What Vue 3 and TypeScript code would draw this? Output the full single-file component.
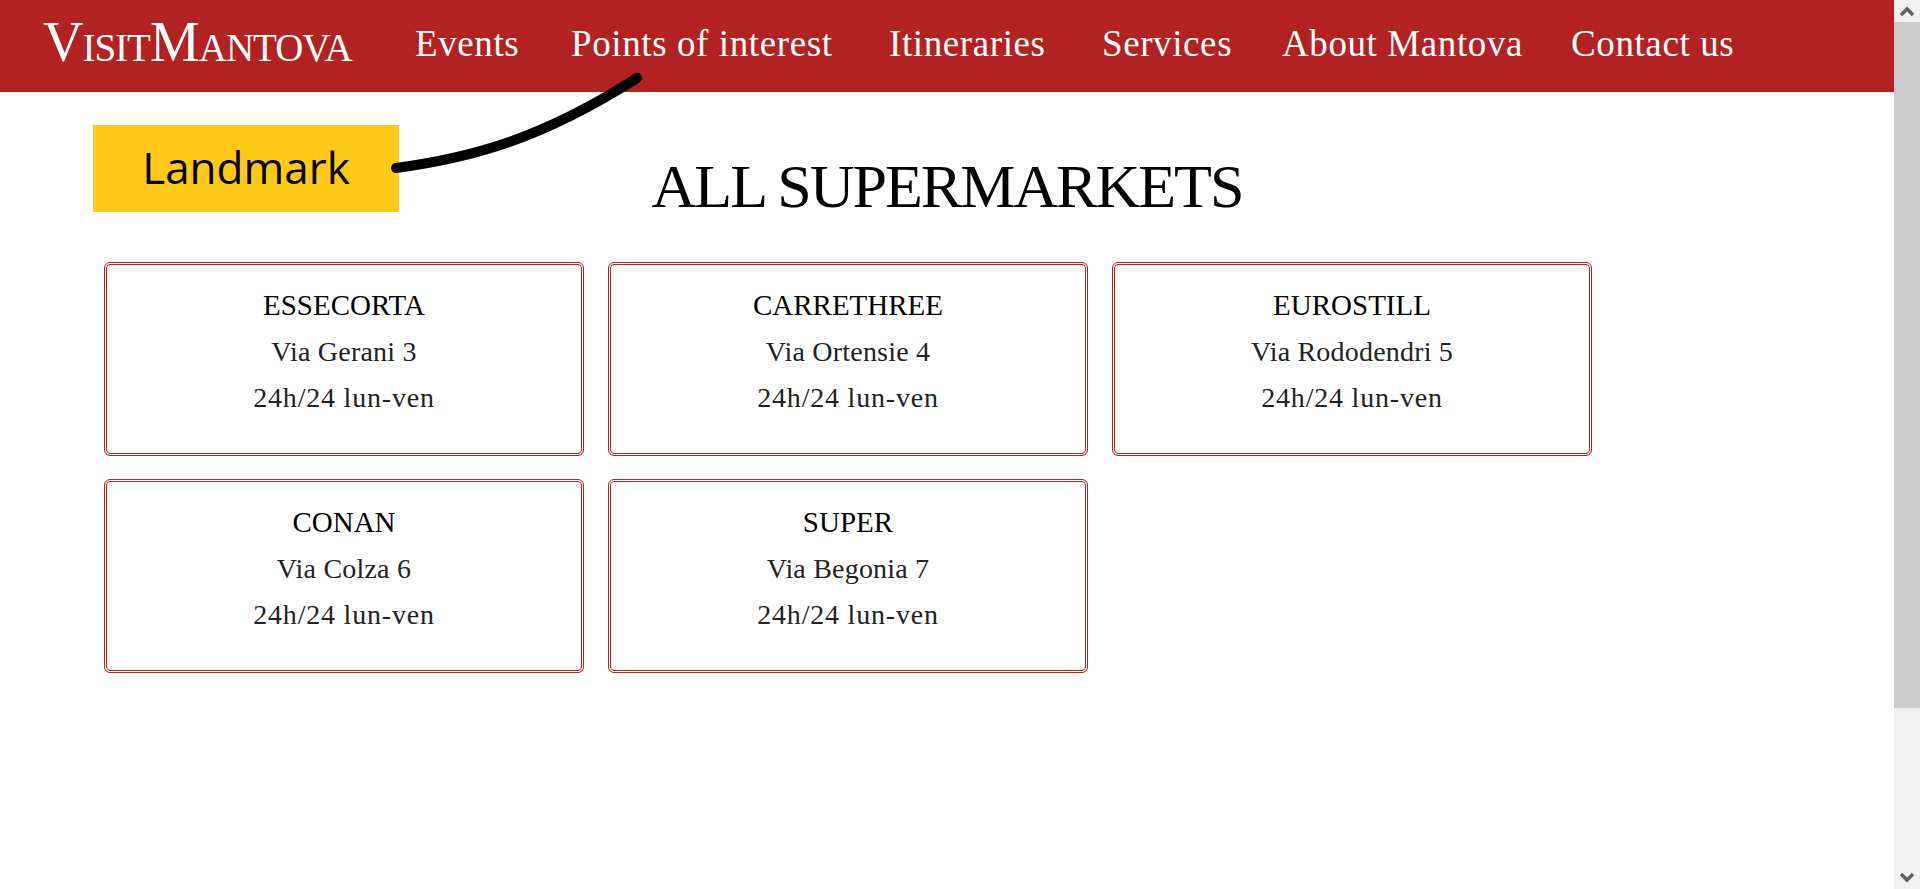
<script setup lang="ts">
const links = ['Events', 'Points of interest', 'Itineraries', 'Services', 'About Mantova', 'Contact us'];

const shops = [
  { name: 'Essecorta', address: 'Via Gerani 3', hours: '24h/24 lun-ven' },
  { name: 'Carrethree', address: 'Via Ortensie 4', hours: '24h/24 lun-ven' },
  { name: 'Eurostill', address: 'Via Rododendri 5', hours: '24h/24 lun-ven' },
  { name: 'Conan', address: 'Via Colza 6', hours: '24h/24 lun-ven' },
  { name: 'Super', address: 'Via Begonia 7', hours: '24h/24 lun-ven' },
];
</script>

<template>
  <div class="window">
    <div class="page">
      <header class="navbar">
        <a class="logo">VisitMantova</a>
        <nav class="links">
          <a v-for="link in links" :key="link">{{ link }}</a>
        </nav>
      </header>

      <main class="content">
        <h1 class="title">All Supermarkets</h1>
        <div class="cards">
          <div v-for="shop in shops" :key="shop.name" class="card">
            <h2>{{ shop.name }}</h2>
            <p class="address">{{ shop.address }}</p>
            <p class="hours">{{ shop.hours }}</p>
          </div>
        </div>
      </main>

      <!-- annotation laid over the page -->
      <div class="landmark">Landmark</div>
      <svg class="pointer" width="1894" height="300" viewBox="0 0 1894 300">
        <path d="M396 168 C 470 158 540 140 637 78" fill="none" stroke="#000" stroke-width="10" stroke-linecap="round" />
      </svg>
    </div>

    <aside class="scrollbar">
      <div class="arrow">
        <svg width="16" height="12" viewBox="0 0 16 12"><path d="M2 10 L8 4 L14 10" fill="none" stroke="#606060" stroke-width="3.4" /></svg>
      </div>
      <div class="thumb"></div>
      <div class="track"></div>
      <div class="arrow">
        <svg width="16" height="12" viewBox="0 0 16 12"><path d="M2 2 L8 8 L14 2" fill="none" stroke="#606060" stroke-width="3.4" /></svg>
      </div>
    </aside>
  </div>
</template>

<style>
html,
body {
  margin: 0;
  overflow: hidden;
  background: #fff;
}
</style>

<style scoped>
.window {
  display: flex;
  height: 889px;
  font-family: "Liberation Serif", serif;
  color: #000;
}

.page {
  position: relative;
  flex: 1;
  min-width: 0;
}

.navbar {
  display: flex;
  align-items: center;
  height: 92px;
  padding-left: 43px;
  background: #b22222;
  color: #fff;
}

.logo {
  width: 372px;
  padding-bottom: 8px;
  font-size: 56px;
  font-variant: small-caps;
  letter-spacing: -1px;
}

.links {
  display: grid;
  grid-template-columns: 103px 265px 160px 127px 236px 162px;
  column-gap: 53px;
  padding-bottom: 5px;
  font-size: 37px;
  letter-spacing: 0.6px;
  white-space: nowrap;
}

.content {
  padding: 0 0 0 104px;
}

.title {
  margin: 0 0 0 -104px;
  padding-top: 56px;
  height: 120px;
  box-sizing: border-box;
  text-align: center;
  font-size: 62px;
  font-weight: 400;
  line-height: 76px;
  letter-spacing: -2px;
  text-transform: uppercase;
}

.cards {
  display: grid;
  grid-template-columns: repeat(3, 480px);
  column-gap: 24px;
  row-gap: 23.5px;
  margin-top: 50px;
}

.card {
  box-sizing: border-box;
  height: 193.5px;
  padding-top: 20px;
  border: 3px double #b22222;
  border-radius: 6px;
  text-align: center;
}

.card h2 {
  margin: 0;
  font-size: 29px;
  font-weight: 400;
  line-height: 40px;
  text-transform: uppercase;
}

.card p {
  margin: 6px 0 0;
  font-size: 28px;
  line-height: 41px;
  color: #222;
}

.card .address {
  letter-spacing: 0.2px;
}

.card .hours {
  margin-top: 5px;
  letter-spacing: 0.8px;
}

.landmark {
  position: absolute;
  left: 93px;
  top: 125px;
  box-sizing: border-box;
  width: 306px;
  height: 87px;
  padding-bottom: 4px;
  display: flex;
  align-items: center;
  justify-content: center;
  background: #ffc917;
  font-family: "Open Sans", sans-serif;
  font-size: 44px;
}

.pointer {
  position: absolute;
  left: 0;
  top: 0;
  pointer-events: none;
}

.scrollbar {
  display: flex;
  flex-direction: column;
  width: 26px;
  background: #f0f0f0;
}

.arrow {
  display: flex;
  align-items: center;
  justify-content: center;
  height: 22px;
}

.thumb {
  height: 686px;
  background: #cdcdcd;
}

.track {
  flex: 1;
}
</style>
